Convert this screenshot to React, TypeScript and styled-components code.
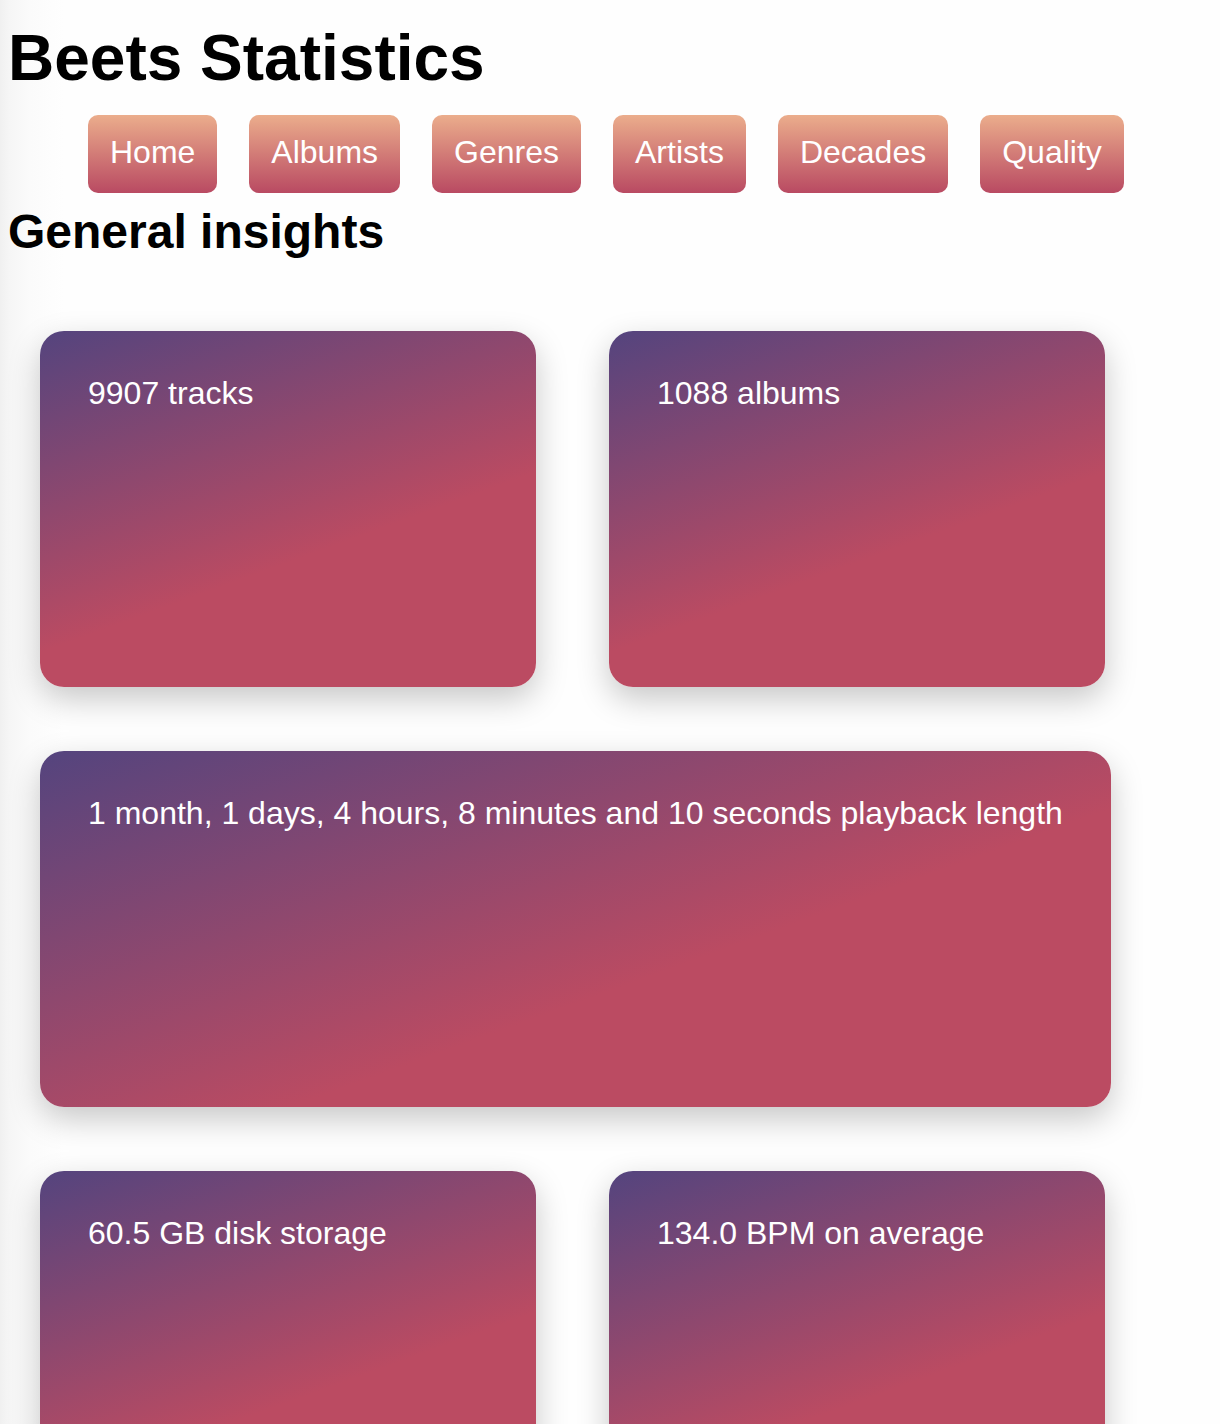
import React from "react";
import styled, { createGlobalStyle } from "styled-components";

const GlobalStyle = createGlobalStyle`
  *, *::before, *::after {
    box-sizing: border-box;
  }

  body {
    margin: 0;
    background: linear-gradient(
      to right,
      #f0f0f0 0,
      #f6f6f6 10px,
      #fbfbfb 30px,
      #fefefe 64px
    );
    color: #000000;
    font-family: Helvetica, "Liberation Sans", Arial, sans-serif;
    font-size: 32px;
    line-height: 36px;
  }
`;

const Page = styled.div`
  padding: 22px 8px 32px;
`;

const Title = styled.h1`
  margin: 0;
  font-size: 64px;
  line-height: 72px;
`;

const NavList = styled.ul`
  display: flex;
  flex-wrap: wrap;
  gap: 32px;
  margin: 21px 0 11px;
  padding: 0 0 0 80px;
  list-style: none;
`;

const NavLink = styled.a`
  display: block;
  padding: 19px 22px 23px;
  border-radius: 10px;
  background: linear-gradient(#ebad8c, #b94a62);
  color: #ffffff;
  text-decoration: none;
`;

const SectionTitle = styled.h2`
  margin: 0;
  font-size: 48px;
  line-height: 56px;
`;

const Cards = styled.section`
  display: flex;
  flex-wrap: wrap;
  gap: 64px 73px;
  padding: 71px 32px 0;
`;

const Card = styled.article`
  min-width: 496px;
  min-height: 356px;
  padding: 44px 48px;
  border-radius: 24px;
  background: linear-gradient(160deg, #54447e 0%, #bb4b62 60%);
  box-shadow: 0 12px 32px rgba(0, 0, 0, 0.22);
  color: #ffffff;
`;

const pages = ["Home", "Albums", "Genres", "Artists", "Decades", "Quality"];

const insights = [
  "9907 tracks",
  "1088 albums",
  "1 month, 1 days, 4 hours, 8 minutes and 10 seconds playback length",
  "60.5 GB disk storage",
  "134.0 BPM on average",
];

export default function App() {
  return (
    <>
      <GlobalStyle />
      <Page>
        <Title>Beets Statistics</Title>
        <nav>
          <NavList>
            {pages.map((page) => (
              <li key={page}>
                <NavLink href={`#${page.toLowerCase()}`}>{page}</NavLink>
              </li>
            ))}
          </NavList>
        </nav>
        <main>
          <SectionTitle>General insights</SectionTitle>
          <Cards>
            {insights.map((insight) => (
              <Card key={insight}>{insight}</Card>
            ))}
          </Cards>
        </main>
      </Page>
    </>
  );
}
